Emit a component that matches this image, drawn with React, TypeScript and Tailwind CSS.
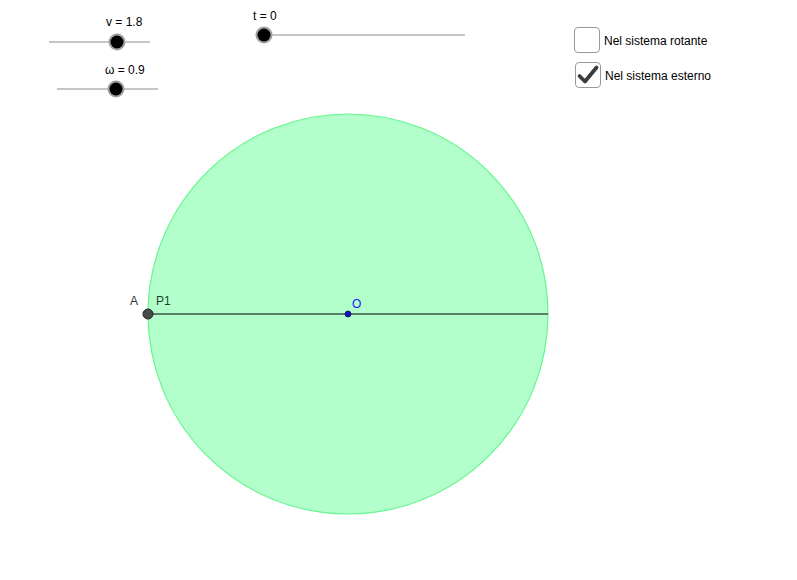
import React from "react";

function Slider({ x1, x2, y, knob }: { x1: number; x2: number; y: number; knob: number }) {
  return (
    <g>
      <line x1={x1} y1={y} x2={x2} y2={y} stroke="#8c8c8c" strokeWidth={1} />
      <circle cx={knob} cy={y} r={8.5} fill="#a0a0a0" />
      <circle cx={knob} cy={y} r={6.5} fill="#000000" />
    </g>
  );
}

export default function App() {
  return (
    <div
      className="relative w-[797px] h-[580px] bg-white overflow-hidden"
      style={{ fontFamily: '"Liberation Sans", Arial, sans-serif' }}
    >
      <svg width={797} height={580} className="absolute left-0 top-0">
        <circle cx={348} cy={314} r={200} fill="#b2ffcb" stroke="#66f58f" strokeWidth={1.2} />
        <line x1={148} y1={314} x2={548} y2={314} stroke="#5c7f68" strokeWidth={2} />
        <circle cx={148} cy={314} r={5} fill="#4a4a4a" stroke="#222" strokeWidth={1} />
        <circle cx={348} cy={314} r={3} fill="#1010d0" stroke="#101050" strokeWidth={0.8} />
        <Slider x1={49} x2={150} y={42} knob={117} />
        <Slider x1={57} x2={158} y={89} knob={116} />
        <Slider x1={264} x2={465} y={35} knob={264} />
      </svg>

      <div className="absolute left-[106px] top-[16px] text-[12px] leading-none text-black">v = 1.8</div>
      <div className="absolute left-[105px] top-[64px] text-[12px] leading-none text-black">ω = 0.9</div>
      <div className="absolute left-[253px] top-[10px] text-[12px] leading-none text-black">t = 0</div>

      <div className="absolute left-[130px] top-[295px] text-[12px] leading-none text-[#333]">A</div>
      <div className="absolute left-[156px] top-[295px] text-[12px] leading-none text-[#1f3f2a]">P1</div>
      <div className="absolute left-[352px] top-[298px] text-[12px] leading-none text-[#1a1aff]">O</div>

      <div className="absolute left-[574px] top-[27px] flex flex-col gap-[9px]">
        <div className="flex items-center gap-[4px]">
          <div className="w-[26px] h-[26px] rounded-[4px] border border-[#9a9a9a] bg-white" />
          <span className="text-[12px] text-black pt-[1px]">Nel sistema rotante</span>
        </div>
        <div className="flex items-center gap-[4px] pl-[1px]">
          <div className="w-[26px] h-[26px] rounded-[4px] border border-[#9a9a9a] bg-white flex items-center justify-center">
            <svg width={24} height={24} viewBox="0 0 24 24">
              <path d="M3.5 13 L9 18.5 L20.5 4.5" fill="none" stroke="#3c3c3c" strokeWidth={3.8} strokeLinecap="round" strokeLinejoin="round" />
            </svg>
          </div>
          <span className="text-[12px] text-black pt-[1px]">Nel sistema esterno</span>
        </div>
      </div>
    </div>
  );
}
